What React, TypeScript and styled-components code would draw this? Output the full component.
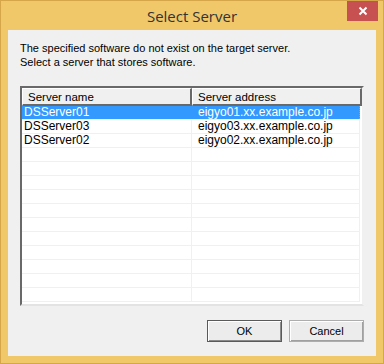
import React from 'react';
import styled, { createGlobalStyle } from 'styled-components';

interface serverProps {
  name: string;
  address: string;
}

const servers: serverProps[] = [
  { name: 'DSServer01', address: 'eigyo01.xx.example.co.jp' },
  { name: 'DSServer03', address: 'eigyo03.xx.example.co.jp' },
  { name: 'DSServer02', address: 'eigyo02.xx.example.co.jp' },
];

const EMPTY_ROWS = 11;

function App() {
  const rows = [
    ...servers,
    ...Array.from({ length: EMPTY_ROWS }, () => ({ name: '', address: '' })),
  ];

  return (
    <>
      <GlobalStyle />
      <S.Window>
        <S.TitleBar>
          <span>Select Server</span>
          <S.CloseButton>
            <svg width="10" height="10" viewBox="0 0 10 10">
              <path d="M1.5 1.5 L8.5 8.5 M8.5 1.5 L1.5 8.5" stroke="#fff" strokeWidth="2" />
            </svg>
          </S.CloseButton>
        </S.TitleBar>

        <S.Client>
          <S.Message>
            <p>The specified software do not exist on the target server.</p>
            <p>Select a server that stores software.</p>
          </S.Message>

          <S.ListBox>
            <S.HeaderRow>
              <S.HeaderCell>Server name</S.HeaderCell>
              <S.HeaderCell>Server address</S.HeaderCell>
            </S.HeaderRow>
            {rows.map((row, i) => (
              <S.Row key={i} $selected={i === 0}>
                <S.Cell $selected={i === 0}>{row.name}</S.Cell>
                <S.Cell $selected={i === 0}>{row.address}</S.Cell>
              </S.Row>
            ))}
          </S.ListBox>

          <S.ButtonBar>
            <S.Button $default>OK</S.Button>
            <S.Button>Cancel</S.Button>
          </S.ButtonBar>
        </S.Client>
      </S.Window>
    </>
  );
}

const GlobalStyle = createGlobalStyle`
  * { box-sizing: border-box; }
  body {
    margin: 0;
    background: #fff;
  }
  p { margin: 0; }
`;

const S = {
  Window: styled.div`
    display: flex;
    flex-direction: column;
    width: 384px;
    height: 364px;
    background-color: #f0c869;
    border: 1px solid #d6a64a;
    padding: 0 7px 7px 7px;
  `,
  TitleBar: styled.div`
    position: relative;
    display: flex;
    align-items: center;
    justify-content: center;
    height: 29px;
    font-family: 'Open Sans', 'Noto Sans', sans-serif;
    font-size: 15px;
    color: #333;
    padding-top: 1px;
  `,
  CloseButton: styled.div`
    position: absolute;
    top: 0;
    right: -2px;
    width: 31px;
    height: 20px;
    display: flex;
    align-items: center;
    justify-content: center;
    background-color: #c75050;
  `,
  Client: styled.div`
    flex: 1;
    display: flex;
    flex-direction: column;
    background-color: #f0f0f0;
    padding: 11px 12px 0 12px;
    font-family: 'Liberation Sans', Arial, sans-serif;
    font-size: 11px;
    color: #000;
  `,
  Message: styled.div`
    line-height: 14px;
    margin-bottom: 17px;
  `,
  ListBox: styled.div`
    height: 220px;
    overflow: hidden;
    background-color: #fff;
    border-top: 2px solid #696969;
    border-left: 2px solid #696969;
    border-right: 2px solid #f0f0f0;
    border-bottom: 2px solid #e3e3e3;
    box-shadow: inset -1px -1px 0 #fff;
    font-size: 12px;
  `,
  HeaderRow: styled.div`
    display: grid;
    grid-template-columns: 170px 1fr;
    height: 18px;
  `,
  HeaderCell: styled.div`
    display: flex;
    align-items: center;
    padding-left: 5px;
    background-color: #f0f0f0;
    border-top: 1px solid #fff;
    border-left: 1px solid #fff;
    border-right: 2px solid #696969;
    border-bottom: 2px solid #696969;
    font-size: 11.5px;
  `,
  Row: styled.div<{ $selected?: boolean }>`
    display: grid;
    grid-template-columns: 170px 1fr;
    height: 14px;
    margin-right: 2px;
    border-bottom: 1px solid #f0f0f0;
    background-color: ${(p) => (p.$selected ? '#3399ff' : '#fff')};
    color: ${(p) => (p.$selected ? '#fff' : '#000')};
    line-height: 13px;
  `,
  Cell: styled.div<{ $selected?: boolean }>`
    padding-left: 2px;
    white-space: nowrap;
    border-right: 1px solid ${(p) => (p.$selected ? '#3399ff' : '#f0f0f0')};
    &:last-child {
      padding-left: 6px;
      border-right: ${(p) => (p.$selected ? '1px dotted #ff8a00' : '1px solid #f0f0f0')};
    }
  `,
  ButtonBar: styled.div`
    display: flex;
    justify-content: flex-end;
    gap: 7px;
    margin-top: 14px;
  `,
  Button: styled.div<{ $default?: boolean }>`
    display: flex;
    align-items: center;
    justify-content: center;
    width: 75px;
    height: 22px;
    background-color: #ececec;
    font-family: 'Liberation Sans', Arial, sans-serif;
    font-size: 11px;
    border: 1px solid ${(p) => (p.$default ? '#5a5a5a' : '#adadad')};
    box-shadow: ${(p) =>
      p.$default
        ? 'inset 1px 1px 0 #fff, inset -1px -1px 0 #8a8a8a'
        : 'inset 1px 1px 0 #fff, inset -1px -1px 0 #a0a0a0'};
  `,
};

export default App;
